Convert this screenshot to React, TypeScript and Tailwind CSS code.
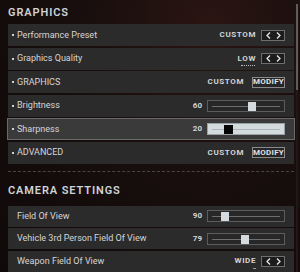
import React from 'react';

type Control =
  | { kind: 'arrows'; value: string; mark?: 'dots' | 'tick' }
  | { kind: 'modify'; value: string }
  | { kind: 'slider'; value: number; pos: number; active?: boolean };

type Row = { label: string; control: Control; bullet?: boolean; active?: boolean };

const graphics: Row[] = [
  { label: 'Performance Preset', bullet: true, control: { kind: 'arrows', value: 'CUSTOM' } },
  { label: 'Graphics Quality', bullet: true, control: { kind: 'arrows', value: 'LOW', mark: 'dots' } },
  { label: 'GRAPHICS', bullet: true, control: { kind: 'modify', value: 'CUSTOM' } },
  { label: 'Brightness', bullet: true, control: { kind: 'slider', value: 60, pos: 0.58 } },
  { label: 'Sharpness', bullet: true, active: true, control: { kind: 'slider', value: 20, pos: 0.2, active: true } },
  { label: 'ADVANCED', bullet: true, control: { kind: 'modify', value: 'CUSTOM' } },
];

const camera: Row[] = [
  { label: 'Field Of View', control: { kind: 'slider', value: 90, pos: 0.14 } },
  { label: 'Vehicle 3rd Person Field Of View', control: { kind: 'slider', value: 79, pos: 0.47 } },
  { label: 'Weapon Field Of View', control: { kind: 'arrows', value: 'WIDE', mark: 'tick' } },
];

function Chevron({ dir }: { dir: 'l' | 'r' }) {
  return (
    <svg width="5" height="7" viewBox="0 0 5 7" className="block">
      <path
        d={dir === 'l' ? 'M4 0.5 L1 3.5 L4 6.5' : 'M1 0.5 L4 3.5 L1 6.5'}
        fill="none"
        stroke="#e6e6e6"
        strokeWidth="1.3"
      />
    </svg>
  );
}

function Value({ text, mark }: { text: string; mark?: 'dots' | 'tick' }) {
  return (
    <span className="relative text-[8px] font-bold tracking-[0.6px] text-[#d4d4d4] leading-none">
      {text}
      {mark === 'dots' && (
        <span className="absolute left-[3px] right-[1px] -bottom-[3px] border-b border-dotted border-[#bdbdbd]" />
      )}
      {mark === 'tick' && (
        <span className="absolute right-[0px] -bottom-[4px] w-[3px] h-[1px] bg-[#9a9a9a]" />
      )}
    </span>
  );
}

function ControlView({ c }: { c: Control }) {
  if (c.kind === 'arrows') {
    return (
      <div className="flex items-center gap-[5px]">
        <Value text={c.value} mark={c.mark} />
        <div className="w-[24px] h-[11px] border border-[#6e6e6e] bg-[#1c1c1c] flex items-center justify-center gap-[5px]">
          <Chevron dir="l" />
          <Chevron dir="r" />
        </div>
      </div>
    );
  }
  if (c.kind === 'modify') {
    return (
      <div className="flex items-center gap-[8px]">
        <Value text={c.value} />
        <div className="w-[33px] h-[11px] border border-[#8a8a8a] bg-[#262626] flex items-center justify-center">
          <span className="text-[8px] font-bold tracking-[0.3px] text-[#e2e2e2] leading-none">MODIFY</span>
        </div>
      </div>
    );
  }
  return (
    <div className="flex items-center gap-[5px]">
      <span className="w-[12px] text-right text-[8px] font-bold text-[#d4d4d4] leading-none">{c.value}</span>
      <div
        className={
          c.active
            ? 'relative w-[78px] h-[12px] border border-[#9aa2a6] bg-[#d3dbdf]'
            : 'relative w-[78px] h-[12px] border border-[#5c5c5c] bg-[#272727]'
        }
      >
        <div
          className={
            c.active
              ? 'absolute left-[4px] right-[4px] top-[5px] h-[1px] bg-[#aeb6ba]'
              : 'absolute left-[4px] right-[4px] top-[5px] h-[1px] bg-[#6e6e6e]'
          }
        />
        <div
          className={
            c.active
              ? 'absolute top-[1px] w-[9px] h-[9px] bg-[#050505]'
              : 'absolute top-[1px] w-[8px] h-[9px] bg-[#d4dadd]'
          }
          style={{ left: `${4 + c.pos * 62}px` }}
        />
      </div>
    </div>
  );
}

function SettingRow({ row, h }: { row: Row; h: string }) {
  return (
    <div
      className={
        row.active
          ? `${h} -mx-[1px] flex items-center justify-between pl-[4px] pr-[9px] bg-[#3a3a3a] border border-[#6a6a6a]`
          : `${h} flex items-center justify-between pr-[9px] ${row.bullet ? 'pl-[4px]' : 'pl-[9px]'} bg-[#2b2b2b]`
      }
    >
      <div className="flex items-center gap-[3px]">
        {row.bullet && <span className="w-[2px] h-[2px] bg-[#d0d0d0]" />}
        <span className="text-[9px] text-[#d6d6d6] leading-none">{row.label}</span>
      </div>
      <ControlView c={row.control} />
    </div>
  );
}

export default function App() {
  return (
    <div
      className="relative w-[300px] h-[272px] overflow-hidden bg-[#150d0d] bg-[radial-gradient(ellipse_at_70%_10%,#2a1512_0%,#170e0d_45%,#100909_100%)]"
      style={{ fontFamily: 'Roboto, "Liberation Sans", sans-serif' }}
    >
      {/* scrollbar */}
      <div className="absolute right-[2px] top-[4px] bottom-0 w-[2px] bg-[#231818]">
        <div className="h-[86px] bg-[#5d5d5d]" />
      </div>

      <div className="pl-[8px] pr-[6px]">
        <div className="h-[24px] flex items-center">
          <h2 className="text-[11px] font-semibold tracking-[0.9px] text-[#cfd3d6] leading-none">GRAPHICS</h2>
        </div>
        <div className="flex flex-col gap-[1.5px]">
          {graphics.map((r) => (
            <SettingRow key={r.label} row={r} h="h-[22px]" />
          ))}
        </div>

        <div className="mt-[7px] border-t border-dashed border-[#4a4444]" />

        <div className="h-[34px] pt-[3px] flex items-center">
          <h2 className="text-[11px] font-semibold tracking-[0.9px] text-[#cfd3d6] leading-none">CAMERA SETTINGS</h2>
        </div>
        <div className="flex flex-col gap-[1.5px]">
          {camera.map((r) => (
            <SettingRow key={r.label} row={r} h="h-[21px]" />
          ))}
        </div>
      </div>
    </div>
  );
}
